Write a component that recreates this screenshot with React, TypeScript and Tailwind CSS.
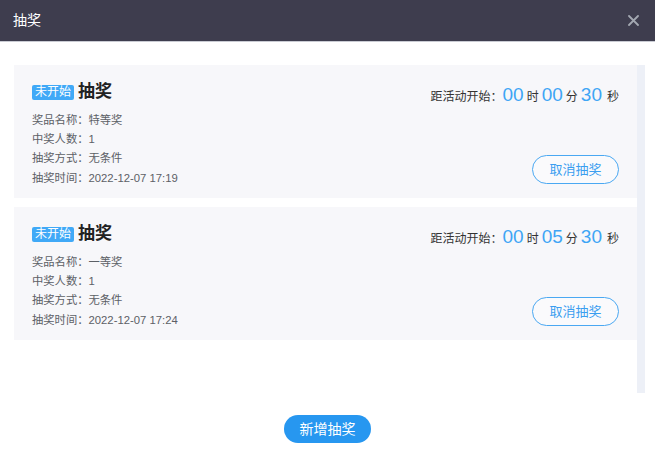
import React from "react";

const font = { fontFamily: '"Liberation Sans", "Noto Sans CJK SC", sans-serif' };

type Item = { prize: string; count: string; mode: string; time: string; h: string; m: string; s: string };

const items: Item[] = [
  { prize: "特等奖", count: "1", mode: "无条件", time: "2022-12-07 17:19", h: "00", m: "00", s: "30" },
  { prize: "一等奖", count: "1", mode: "无条件", time: "2022-12-07 17:24", h: "00", m: "05", s: "30" },
];

function Card({ it }: { it: Item }) {
  return (
    <div className="bg-[#f7f7fa] h-[133px] pl-[18px] pr-[18px] pt-[15px] pb-[14px] flex justify-between">
      <div className="flex flex-col">
        <div className="flex items-center h-[26px]">
          <span className="bg-[#40a9f7] text-white text-[12px] leading-[15px] h-[15px] px-[3px] rounded-[2px]">未开始</span>
          <span className="ml-[4px] text-[17px] font-semibold text-[#222] leading-[24px]">抽奖</span>
        </div>
        <div className="mt-[7px] text-[11.3px] text-[#5c6066] leading-[19.2px]">
          <div>奖品名称：{it.prize}</div>
          <div>中奖人数：{it.count}</div>
          <div>抽奖方式：{it.mode}</div>
          <div>抽奖时间：{it.time}</div>
        </div>
      </div>
      <div className="flex flex-col items-end justify-between">
        <div className="flex items-baseline mt-[4px] text-[12px] text-[#333] leading-[22px]">
          <span>距活动开始：</span>
          <span className="text-[19px] text-[#3ea5f5] leading-[22px]">{it.h}</span>
          <span className="mx-[3px]">时</span>
          <span className="text-[19px] text-[#3ea5f5] leading-[22px]">{it.m}</span>
          <span className="mx-[3px]">分</span>
          <span className="text-[19px] text-[#3ea5f5] leading-[22px]">{it.s}</span>
          <span className="ml-[5px]">秒</span>
        </div>
        <button className="w-[87px] h-[29px] rounded-full border border-[#4aa8f2] text-[#3a9ef0] text-[13px] bg-white/40" style={font}>
          取消抽奖
        </button>
      </div>
    </div>
  );
}

export default function App() {
  return (
    <div className="w-[655px] h-[451px] bg-white flex flex-col" style={font}>
      <div className="h-[41px] bg-[#3e3d4e] flex items-center justify-between pl-[13px] pr-[16px] shrink-0">
        <span className="text-white text-[14px]">抽奖</span>
        <svg width="11" height="11" viewBox="0 0 11 11">
          <path d="M1 1 L10 10 M10 1 L1 10" stroke="#a3a8b1" strokeWidth="1.8" strokeLinecap="round" />
        </svg>
      </div>
      <div className="h-[1px] bg-[#c9cbd3] shrink-0" />
      <div className="flex pl-[14px] pr-[10px] mt-[23px] h-[328px] shrink-0">
        <div className="flex-1 flex flex-col gap-[9px]">
          {items.map((it, i) => (
            <Card key={i} it={it} />
          ))}
        </div>
        <div className="w-[8px] bg-[#edf0f7]" />
      </div>
      <div className="flex justify-center mt-[22px]">
        <button className="w-[87px] h-[28px] rounded-full bg-[#2797f0] text-white text-[14px]" style={font}>
          新增抽奖
        </button>
      </div>
    </div>
  );
}
